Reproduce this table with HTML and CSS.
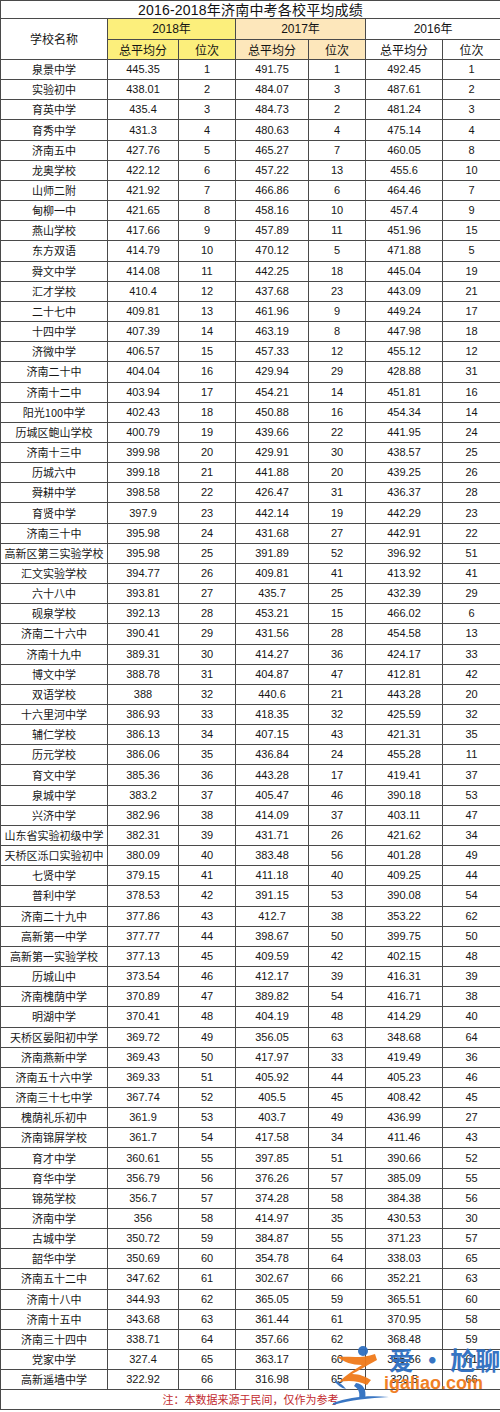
FILE: index.html
```html
<!DOCTYPE html>
<html lang="zh-CN">
<head>
<meta charset="utf-8">
<title>2016-2018年济南中考各校平均成绩</title>
<link rel="stylesheet" href="styles.css">
</head>
<body>
<div class="sheet">
<table class="scores">
<colgroup>
<col class="c-name"><col class="c-s18"><col class="c-r18"><col class="c-s17"><col class="c-r17"><col class="c-s16"><col class="c-r16">
</colgroup>
<thead>
<tr class="r-title"><th colspan="7" class="title">2016-2018年济南中考各校平均成绩</th></tr>
<tr class="r-year"><th rowspan="2" class="hname">学校名称</th><th colspan="2" class="y18">2018年</th><th colspan="2" class="y17">2017年</th><th colspan="2" class="y16">2016年</th></tr>
<tr class="r-head"><th class="y18">总平均分</th><th class="y18">位次</th><th class="y17">总平均分</th><th class="y17">位次</th><th>总平均分</th><th>位次</th></tr>
</thead>
<tbody>
<tr><td class="n">泉景中学</td><td>445.35</td><td>1</td><td>491.75</td><td>1</td><td>492.45</td><td>1</td></tr>
<tr><td class="n">实验初中</td><td>438.01</td><td>2</td><td>484.07</td><td>3</td><td>487.61</td><td>2</td></tr>
<tr><td class="n">育英中学</td><td>435.4</td><td>3</td><td>484.73</td><td>2</td><td>481.24</td><td>3</td></tr>
<tr><td class="n">育秀中学</td><td>431.3</td><td>4</td><td>480.63</td><td>4</td><td>475.14</td><td>4</td></tr>
<tr><td class="n">济南五中</td><td>427.76</td><td>5</td><td>465.27</td><td>7</td><td>460.05</td><td>8</td></tr>
<tr><td class="n">龙奥学校</td><td>422.12</td><td>6</td><td>457.22</td><td>13</td><td>455.6</td><td>10</td></tr>
<tr><td class="n">山师二附</td><td>421.92</td><td>7</td><td>466.86</td><td>6</td><td>464.46</td><td>7</td></tr>
<tr><td class="n">甸柳一中</td><td>421.65</td><td>8</td><td>458.16</td><td>10</td><td>457.4</td><td>9</td></tr>
<tr><td class="n">燕山学校</td><td>417.66</td><td>9</td><td>457.89</td><td>11</td><td>451.96</td><td>15</td></tr>
<tr><td class="n">东方双语</td><td>414.79</td><td>10</td><td>470.12</td><td>5</td><td>471.88</td><td>5</td></tr>
<tr><td class="n">舜文中学</td><td>414.08</td><td>11</td><td>442.25</td><td>18</td><td>445.04</td><td>19</td></tr>
<tr><td class="n">汇才学校</td><td>410.4</td><td>12</td><td>437.68</td><td>23</td><td>443.09</td><td>21</td></tr>
<tr><td class="n">二十七中</td><td>409.81</td><td>13</td><td>461.96</td><td>9</td><td>449.24</td><td>17</td></tr>
<tr><td class="n">十四中学</td><td>407.39</td><td>14</td><td>463.19</td><td>8</td><td>447.98</td><td>18</td></tr>
<tr><td class="n">济微中学</td><td>406.57</td><td>15</td><td>457.33</td><td>12</td><td>455.12</td><td>12</td></tr>
<tr><td class="n">济南二十中</td><td>404.04</td><td>16</td><td>429.94</td><td>29</td><td>428.88</td><td>31</td></tr>
<tr><td class="n">济南十二中</td><td>403.94</td><td>17</td><td>454.21</td><td>14</td><td>451.81</td><td>16</td></tr>
<tr><td class="n">阳光100中学</td><td>402.43</td><td>18</td><td>450.88</td><td>16</td><td>454.34</td><td>14</td></tr>
<tr><td class="n">历城区鲍山学校</td><td>400.79</td><td>19</td><td>439.66</td><td>22</td><td>441.95</td><td>24</td></tr>
<tr><td class="n">济南十三中</td><td>399.98</td><td>20</td><td>429.91</td><td>30</td><td>438.57</td><td>25</td></tr>
<tr><td class="n">历城六中</td><td>399.18</td><td>21</td><td>441.88</td><td>20</td><td>439.25</td><td>26</td></tr>
<tr><td class="n">舜耕中学</td><td>398.58</td><td>22</td><td>426.47</td><td>31</td><td>436.37</td><td>28</td></tr>
<tr><td class="n">育贤中学</td><td>397.9</td><td>23</td><td>442.14</td><td>19</td><td>442.29</td><td>23</td></tr>
<tr><td class="n">济南三十中</td><td>395.98</td><td>24</td><td>431.68</td><td>27</td><td>442.91</td><td>22</td></tr>
<tr><td class="n">高新区第三实验学校</td><td>395.98</td><td>25</td><td>391.89</td><td>52</td><td>396.92</td><td>51</td></tr>
<tr><td class="n">汇文实验学校</td><td>394.77</td><td>26</td><td>409.81</td><td>41</td><td>413.92</td><td>41</td></tr>
<tr><td class="n">六十八中</td><td>393.81</td><td>27</td><td>435.7</td><td>25</td><td>432.39</td><td>29</td></tr>
<tr><td class="n">砚泉学校</td><td>392.13</td><td>28</td><td>453.21</td><td>15</td><td>466.02</td><td>6</td></tr>
<tr><td class="n">济南二十六中</td><td>390.41</td><td>29</td><td>431.56</td><td>28</td><td>454.58</td><td>13</td></tr>
<tr><td class="n">济南十九中</td><td>389.31</td><td>30</td><td>414.27</td><td>36</td><td>424.17</td><td>33</td></tr>
<tr><td class="n">博文中学</td><td>388.78</td><td>31</td><td>404.87</td><td>47</td><td>412.81</td><td>42</td></tr>
<tr><td class="n">双语学校</td><td>388</td><td>32</td><td>440.6</td><td>21</td><td>443.28</td><td>20</td></tr>
<tr><td class="n">十六里河中学</td><td>386.93</td><td>33</td><td>418.35</td><td>32</td><td>425.59</td><td>32</td></tr>
<tr><td class="n">辅仁学校</td><td>386.13</td><td>34</td><td>407.15</td><td>43</td><td>421.31</td><td>35</td></tr>
<tr><td class="n">历元学校</td><td>386.06</td><td>35</td><td>436.84</td><td>24</td><td>455.28</td><td>11</td></tr>
<tr><td class="n">育文中学</td><td>385.36</td><td>36</td><td>443.28</td><td>17</td><td>419.41</td><td>37</td></tr>
<tr><td class="n">泉城中学</td><td>383.2</td><td>37</td><td>405.47</td><td>46</td><td>390.18</td><td>53</td></tr>
<tr><td class="n">兴济中学</td><td>382.96</td><td>38</td><td>414.09</td><td>37</td><td>403.11</td><td>47</td></tr>
<tr><td class="n">山东省实验初级中学</td><td>382.31</td><td>39</td><td>431.71</td><td>26</td><td>421.62</td><td>34</td></tr>
<tr><td class="n">天桥区泺口实验初中</td><td>380.09</td><td>40</td><td>383.48</td><td>56</td><td>401.28</td><td>49</td></tr>
<tr><td class="n">七贤中学</td><td>379.15</td><td>41</td><td>411.18</td><td>40</td><td>409.25</td><td>44</td></tr>
<tr><td class="n">普利中学</td><td>378.53</td><td>42</td><td>391.15</td><td>53</td><td>390.08</td><td>54</td></tr>
<tr><td class="n">济南二十九中</td><td>377.86</td><td>43</td><td>412.7</td><td>38</td><td>353.22</td><td>62</td></tr>
<tr><td class="n">高新第一中学</td><td>377.77</td><td>44</td><td>398.67</td><td>50</td><td>399.75</td><td>50</td></tr>
<tr><td class="n">高新第一实验学校</td><td>377.13</td><td>45</td><td>409.59</td><td>42</td><td>402.15</td><td>48</td></tr>
<tr><td class="n">历城山中</td><td>373.54</td><td>46</td><td>412.17</td><td>39</td><td>416.31</td><td>39</td></tr>
<tr><td class="n">济南槐荫中学</td><td>370.89</td><td>47</td><td>389.82</td><td>54</td><td>416.71</td><td>38</td></tr>
<tr><td class="n">明湖中学</td><td>370.41</td><td>48</td><td>404.19</td><td>48</td><td>414.29</td><td>40</td></tr>
<tr><td class="n">天桥区晏阳初中学</td><td>369.72</td><td>49</td><td>356.05</td><td>63</td><td>348.68</td><td>64</td></tr>
<tr><td class="n">济南燕新中学</td><td>369.43</td><td>50</td><td>417.97</td><td>33</td><td>419.49</td><td>36</td></tr>
<tr><td class="n">济南五十六中学</td><td>369.33</td><td>51</td><td>405.92</td><td>44</td><td>405.23</td><td>46</td></tr>
<tr><td class="n">济南三十七中学</td><td>367.74</td><td>52</td><td>405.5</td><td>45</td><td>408.42</td><td>45</td></tr>
<tr><td class="n">槐荫礼乐初中</td><td>361.9</td><td>53</td><td>403.7</td><td>49</td><td>436.99</td><td>27</td></tr>
<tr><td class="n">济南锦屏学校</td><td>361.7</td><td>54</td><td>417.58</td><td>34</td><td>411.46</td><td>43</td></tr>
<tr><td class="n">育才中学</td><td>360.61</td><td>55</td><td>397.85</td><td>51</td><td>390.66</td><td>52</td></tr>
<tr><td class="n">育华中学</td><td>356.79</td><td>56</td><td>376.26</td><td>57</td><td>385.09</td><td>55</td></tr>
<tr><td class="n">锦苑学校</td><td>356.7</td><td>57</td><td>374.28</td><td>58</td><td>384.38</td><td>56</td></tr>
<tr><td class="n">济南中学</td><td>356</td><td>58</td><td>414.97</td><td>35</td><td>430.53</td><td>30</td></tr>
<tr><td class="n">古城中学</td><td>350.72</td><td>59</td><td>384.87</td><td>55</td><td>371.23</td><td>57</td></tr>
<tr><td class="n">韶华中学</td><td>350.69</td><td>60</td><td>354.78</td><td>64</td><td>338.03</td><td>65</td></tr>
<tr><td class="n">济南五十二中</td><td>347.62</td><td>61</td><td>302.67</td><td>66</td><td>352.21</td><td>63</td></tr>
<tr><td class="n">济南十八中</td><td>344.93</td><td>62</td><td>365.05</td><td>59</td><td>365.51</td><td>60</td></tr>
<tr><td class="n">济南十五中</td><td>343.68</td><td>63</td><td>361.44</td><td>61</td><td>370.95</td><td>58</td></tr>
<tr><td class="n">济南三十四中</td><td>338.71</td><td>64</td><td>357.66</td><td>62</td><td>368.48</td><td>59</td></tr>
<tr><td class="n">党家中学</td><td>327.4</td><td>65</td><td>363.17</td><td>60</td><td>355.56</td><td>61</td></tr>
<tr><td class="n">高新遥墙中学</td><td>322.92</td><td>66</td><td>316.98</td><td>65</td><td>320.5</td><td>66</td></tr>
</tbody>
<tfoot>
<tr class="r-foot"><td colspan="7" class="note">注：本数据来源于民间，仅作为参考</td></tr>
</tfoot>
</table>
<div class="logo" aria-label="爱·尬聊 igaliao.com">
<svg class="logo-mark" width="56" height="60" viewBox="0 0 56 60">
<circle cx="30" cy="6" r="5" fill="#2f6fc0"/>
<path d="M4 12 C16 11 28 14 42 9 L44 15 C33 21 25 26 19 29 C27 29 33 32 38 35 L34 40 C26 36 16 35 6 37 C13 30 21 25 29 20 C19 20 11 17 4 12 Z" fill="#f07a1a"/>
<path d="M1 35 C6 37 10 40 13 44 C8 43 4 40 1 35 Z" fill="#2f6fc0"/>
<path d="M23 38 C30 39 34 44 32 54 L26 54 C27 48 26 44 21 41 Z" fill="#2f6fc0"/>
<path d="M0 58 C16 52 34 50 56 52 C36 53 18 55 0 60 Z" fill="#2f6fc0"/>
</svg>
<div class="logo-text">
<span class="logo-cn">爱 · 尬聊</span>
<span class="logo-en">igaliao.com</span>
</div>
</div>
</div>
</body>
</html>
```
FILE: styles.css
```css
html, body {
  margin: 0;
  padding: 0;
  background: #ffffff;
}
body {
  width: 500px;
  height: 1412px;
  overflow: hidden;
  font-family: "Liberation Sans", Arial, "Noto Sans CJK SC", sans-serif;
  color: #1c1c1c;
}
.sheet {
  position: relative;
  width: 500px;
}
.scores {
  width: 500px;
  border-collapse: collapse;
  table-layout: fixed;
}
.c-name { width: 107px; }
.c-s18 { width: 71px; }
.c-r18 { width: 57px; }
.c-s17 { width: 73px; }
.c-r17 { width: 57px; }
.c-s16 { width: 77px; }
.c-r16 { width: 58px; }
.scores th, .scores td {
  border: 1px solid #4a4a4a;
  padding: 0;
  text-align: center;
  vertical-align: middle;
  white-space: nowrap;
  line-height: 1;
}
.scores th {
  font-weight: normal;
  font-size: 12px;
  font-family: "Liberation Sans", "Noto Sans CJK SC", sans-serif;
  color: #141414;
}
.r-title { height: 18px; }
.r-year { height: 21px; }
.r-head { height: 20px; }
.scores th.title {
  font-size: 14px;
  line-height: 16px;
  font-family: "Liberation Sans", "Noto Sans CJK SC", sans-serif;
  color: #111111;
  letter-spacing: 0.2px;
}
.scores th.hname {
  font-family: "Noto Sans CJK SC", sans-serif;
  background: #ffffff;
}
.scores th.y18 { background: #fcef7c; }
.scores th.y17 { background: #fde7bb; }
.scores th.y16 { background: #ffffff; }
.r-head th {
  font-family: "Noto Sans CJK SC", sans-serif;
}
.scores tbody tr { height: 20.17px; }
.scores td {
  font-size: 11px;
  color: #161616;
  overflow: hidden;
}
.scores td.n {
  font-family: "Noto Sans CJK SC", sans-serif;
  font-size: 11px;
}
.r-foot { height: 20px; }
.scores td.note {
  font-family: "Noto Sans CJK SC", sans-serif;
  font-size: 11px;
  color: #c22a2e;
}
.logo {
  position: absolute;
  left: 333px;
  top: 1345px;
  display: flex;
  align-items: flex-start;
  opacity: 0.95;
}
.logo-mark {
  display: block;
}
.logo-text {
  display: flex;
  flex-direction: column;
  align-items: flex-start;
  margin-left: -5px;
}
.logo-cn {
  font-family: "Noto Sans CJK SC", sans-serif;
  font-weight: bold;
  font-size: 25px;
  line-height: 28px;
  color: #2c6dc0;
  padding-left: 5px;
  white-space: nowrap;
}
.logo-en {
  font-family: "Liberation Sans", sans-serif;
  font-weight: bold;
  font-size: 18px;
  line-height: 20px;
  color: #f07a1a;
  white-space: nowrap;
}
```
